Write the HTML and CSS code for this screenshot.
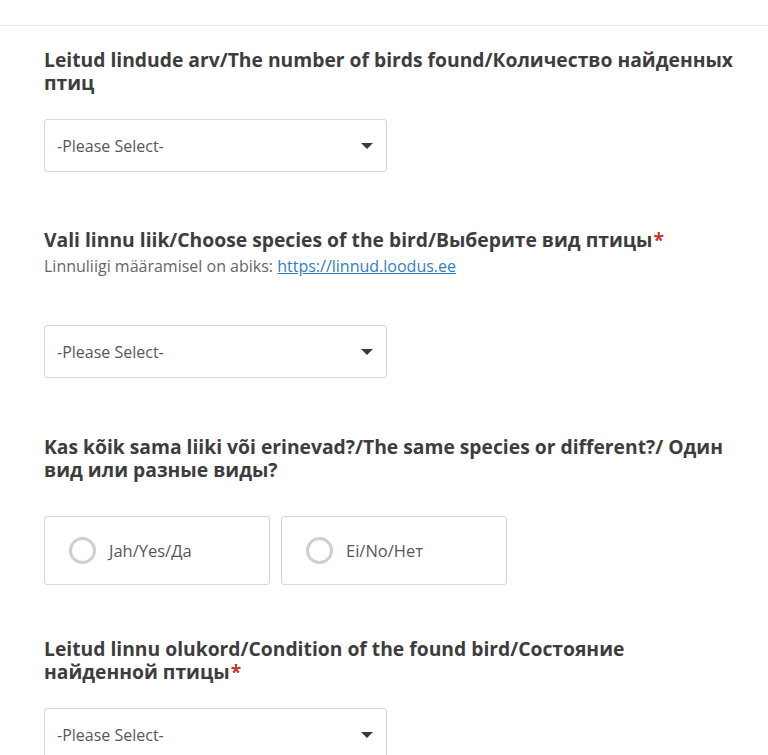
FILE: index.html
```html
<!DOCTYPE html>
<html lang="et">
<head>
<meta charset="utf-8">
<title>Form</title>
<link rel="stylesheet" href="styles.css">
</head>
<body>
<div class="topbar"></div>
<main class="form">
  <section class="field f1">
    <h2 class="label">Leitud lindude arv/The number of birds found/Количество найденных птиц</h2>
    <div class="select"><span>-Please Select-</span><span class="arrow"></span></div>
  </section>
  <section class="field f2">
    <h2 class="label">Vali linnu liik/Choose species of the bird/Выберите вид птицы<span class="req">*</span></h2>
    <p class="sub">Linnuliigi määramisel on abiks: <a href="#">https://linnud.loodus.ee</a></p>
    <div class="select"><span>-Please Select-</span><span class="arrow"></span></div>
  </section>
  <section class="field f3">
    <h2 class="label">Kas kõik sama liiki või erinevad?/The same species or different?/ Один вид или разные виды?</h2>
    <div class="radios">
      <div class="radio"><span class="circle"></span><span>Jah/Yes/Да</span></div>
      <div class="radio"><span class="circle"></span><span>Ei/No/Нет</span></div>
    </div>
  </section>
  <section class="field f4">
    <h2 class="label">Leitud linnu olukord/Condition of the found bird/Состояние найденной птицы<span class="req">*</span></h2>
    <div class="select"><span>-Please Select-</span><span class="arrow"></span></div>
  </section>
</main>
</body>
</html>
```
FILE: styles.css
```css
html, body {
  margin: 0;
  padding: 0;
  background: #fff;
  overflow: hidden;
}
body {
  font-family: "Open Sans", "Noto Sans", sans-serif;
  color: #3b3b3b;
}
.topbar {
  height: 25px;
  border-bottom: 1px solid #e6e6e6;
}
.form {
  padding: 0 24px 0 44px;
}
.field {
  display: flex;
  flex-direction: column;
  align-items: flex-start;
}
.label {
  margin: 0;
  font-size: 19.3px;
  line-height: 23px;
  font-weight: 700;
  color: #3d3d3d;
  max-width: 692px;
}
.req {
  color: #c0392b;
  margin-left: 1px;
}
.f1 { padding-top: 22px; }
.f1 .label { margin-bottom: 25px; }
.f2 { padding-top: 56px; }
.f2 .label { margin-bottom: 5px; }
.f3 { padding-top: 57px; }
.f3 .label { margin-bottom: 35px; }
.f4 { padding-top: 52px; }
.f4 .label { margin-bottom: 25px; }
.sub {
  margin: 0 0 48px;
  font-size: 16px;
  line-height: 21px;
  color: #666;
}
.sub a {
  color: #2f7fc4;
  text-decoration: underline;
}
.select {
  box-sizing: border-box;
  width: 343px;
  height: 53px;
  border: 1px solid #d6d6d6;
  border-radius: 3px;
  display: flex;
  align-items: center;
  justify-content: space-between;
  padding: 0 13px 0 12px;
  font-size: 16px;
  color: #575757;
}
.arrow {
  width: 0;
  height: 0;
  border-left: 6px solid transparent;
  border-right: 6px solid transparent;
  border-top: 6px solid #3a3a3a;
}
.radios {
  display: flex;
  gap: 11px;
}
.radio {
  box-sizing: border-box;
  width: 226px;
  height: 69px;
  border: 1px solid #d6d6d6;
  border-radius: 3px;
  display: flex;
  align-items: center;
  gap: 13px;
  padding-left: 24px;
  font-size: 16.5px;
  color: #575757;
}
.circle {
  box-sizing: border-box;
  width: 27px;
  height: 27px;
  border: 3px solid #cfcfcf;
  border-radius: 50%;
}
```
